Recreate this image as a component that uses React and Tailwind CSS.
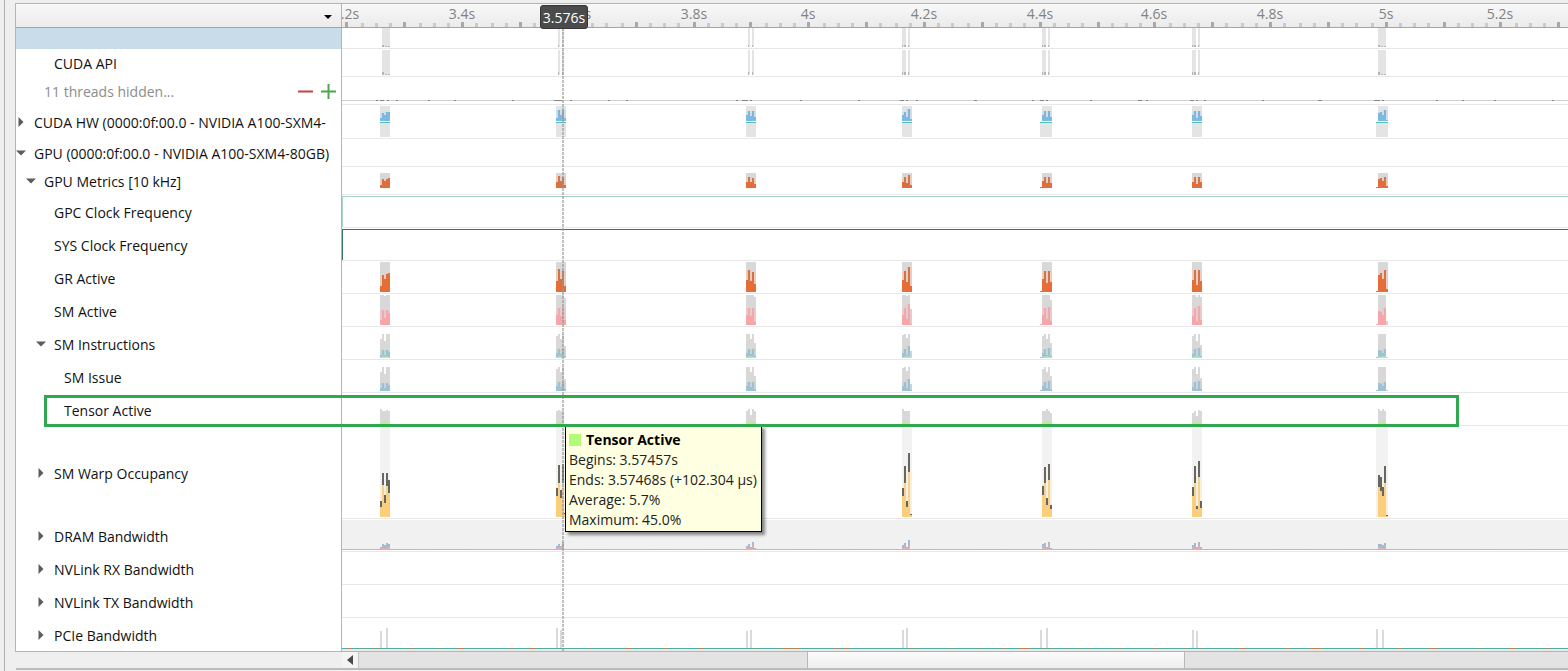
import React from "react";

const ORIGIN = 342;
const COLUMN = 2;

const CLUSTERS = [
  {
    x: 380,
    gr: [6, 17, 13, 18, 19],
    sm: [5, 15, 7, 15, 12], smMax: [30, 30, 29, 30, 30],
    issue: [3, 8, 3, 8, 6], issueMax: [19, 24, 17, 24, 24],
    tensor: [16, 14, 14, 15, 14],
    hw: [3, 8, 6, 9, 9],
    warp: [[16, 10], [44, 32], [22, 14], [44, 31], [37, 24]],
    dram: [3, 6, 5, 7, 6],
    api: [[382, 8]], pcie: [[380, 17], [386, 20]],
  },
  {
    x: 556,
    gr: [11, 23, 13, 21, 6],
    sm: [10, 17, 9, 18, 5], smMax: [30, 30, 30, 30, 27],
    issue: [5, 9, 4, 9, 2], issueMax: [22, 24, 19, 24, 12],
    tensor: [14, 15, 14, 14, 1],
    hw: [3, 11, 6, 11, 3],
    warp: [[29, 21], [52, 34], [27, 19], [53, 34], [4, 3]],
    dram: [4, 6, 4, 8, 1],
    api: [[558, 2], [562, 2]], pcie: [[556, 20], [560, 18]],
  },
  {
    x: 746,
    gr: [12, 22, 11, 20, 8],
    sm: [10, 17, 9, 17, 3], smMax: [30, 30, 30, 30, 28],
    issue: [5, 9, 4, 9, 2], issueMax: [24, 24, 19, 24, 15],
    tensor: [14, 16, 10, 16, 14],
    hw: [6, 10, 5, 10, 4],
    warp: [[29, 21], [51, 34], [20, 14], [53, 36], [8, 4]],
    dram: [4, 6, 3, 8, 2],
    api: [[748, 2], [752, 2]], pcie: [[746, 17], [750, 18]],
  },
  {
    x: 902,
    gr: [12, 21, 10, 25, 6],
    sm: [10, 17, 6, 21, 1], smMax: [30, 30, 29, 30, 16],
    issue: [5, 9, 3, 12, 1], issueMax: [23, 24, 20, 24, 7],
    tensor: [16, 14, 14, 14, 1],
    hw: [6, 9, 4, 12, 2],
    warp: [[29, 21], [51, 34], [16, 10], [64, 45], [3, 2]],
    dram: [5, 7, 3, 10, 1],
    api: [[902, 4], [908, 2]], pcie: [[902, 18], [906, 20]],
  },
  {
    x: 1042, lead: true,
    gr: [13, 21, 9, 21, 10],
    sm: [10, 17, 6, 18, 4], smMax: [30, 30, 30, 30, 25],
    issue: [5, 9, 3, 10, 2], issueMax: [22, 24, 19, 24, 15],
    tensor: [14, 14, 16, 14, 12],
    hw: [6, 10, 4, 10, 4],
    warp: [[31, 22], [50, 34], [19, 12], [53, 37], [12, 8]],
    dram: [6, 7, 3, 8, 2],
    api: [[1042, 4], [1048, 2]], pcie: [[1040, 18], [1046, 20]],
  },
  {
    x: 1192,
    gr: [12, 22, 7, 22, 11],
    sm: [9, 17, 4, 19, 5], smMax: [30, 30, 28, 30, 28],
    issue: [4, 9, 2, 10, 2], issueMax: [22, 24, 17, 24, 13],
    tensor: [12, 14, 9, 15, 14],
    hw: [6, 10, 3, 10, 5],
    warp: [[30, 21], [51, 34], [11, 8], [56, 40], [16, 9]],
    dram: [5, 7, 3, 8, 3],
    api: [[1192, 4], [1198, 2]], pcie: [[1192, 18], [1196, 17]],
  },
  {
    x: 1378, lead: true,
    gr: [17, 19, 13, 22, 3],
    sm: [14, 13, 10, 17, 0], smMax: [30, 30, 30, 30, 4],
    issue: [8, 7, 5, 9, 0], issueMax: [24, 24, 24, 24, 1],
    tensor: [16, 14, 16, 14, 1],
    hw: [8, 9, 6, 11, 1],
    warp: [[42, 30], [40, 26], [30, 21], [51, 34], [2, 1]],
    dram: [6, 6, 5, 7, 0],
    api: [[1378, 8]], pcie: [[1376, 19], [1382, 18]],
  },
];

const px = (x) => x - ORIGIN;

function neighbours(values, i) {
  const left = i > 0 ? values[i - 1] : 0;
  const right = i < values.length - 1 ? values[i + 1] : 0;
  return [left, right];
}

/* Average bars in front of the column's range, with a tint where only the peak reaches. */
function Bars({ x, base, values, max, back = "#d8d8d8", tint, color, tall, lead }) {
  return (
    <g>
      {values.map((h, i) => {
        const [l, r] = neighbours(values, i);
        const peak = Math.max(h, Math.min(max[i], Math.max(l, r)));
        const shade = h > l && h > r && i > 0 ? h - Math.max(l, r) : 0;
        const cx = px(x) + i * COLUMN;
        return (
          <g key={i}>
            <rect x={cx} y={base - max[i]} width={COLUMN} height={max[i]} fill={back} />
            <rect x={cx} y={base - peak} width={COLUMN} height={peak} fill={tint} />
            <rect x={cx} y={base - h} width={COLUMN} height={h} fill={color} />
            <rect x={cx} y={base - h} width={COLUMN} height={shade} fill={tall} />
          </g>
        );
      })}
      {lead && <rect x={px(x) - 2} y={base - 1} width="2" height="1" fill={tall} />}
    </g>
  );
}

const full = (n) => [n, n, n, n, n];

function ApiBars({ top, base, mark }) {
  return CLUSTERS.map((c) =>
    c.api.map(([x, w]) => (
      <g key={x}>
        <rect x={px(x)} y={top} width={w} height={base - top} fill="#e4e4e4" />
        <rect x={px(x)} y={base - mark} width={w > 4 ? 2 : 1} height={mark} fill="#b4b4b4" />
        {w === 4 && <rect x={px(x) + 2} y={base - mark} width="2" height={mark} fill="#b4b4b4" />}
        {w > 4 && <rect x={px(x) + 3} y={base - 1} width="2" height="1" fill="#b4b4b4" />}
        {w > 4 && <rect x={px(x) + 6} y={base - 1} width="2" height="1" fill="#b4b4b4" />}
      </g>
    ))
  );
}

const THREAD_MARKS = [
  [376, 2], [380, 4], [387, 2], [396, 2], [428, 2], [454, 2], [512, 2], [554, 8], [570, 2], [608, 2], [626, 2],
  [736, 2], [742, 6], [750, 2], [800, 2], [858, 2], [900, 4], [906, 2], [916, 2], [974, 3], [1032, 2], [1040, 4],
  [1046, 2], [1090, 2], [1138, 4], [1146, 2], [1190, 4], [1196, 2], [1204, 2], [1262, 2], [1318, 4], [1374, 6],
  [1382, 2], [1436, 2], [1462, 2], [1494, 2], [1552, 2],
];

const DRAM_MARKS = [
  [342, 10], [390, 28], [430, 40], [520, 18], [580, 30], [650, 22], [700, 40], [790, 30], [850, 26], [922, 14],
  [976, 30], [1056, 20], [1084, 16], [1120, 18], [1204, 32], [1274, 36], [1340, 24], [1400, 20], [1476, 20], [1530, 30],
];

const PCIE_MARKS = [
  [348, 3], [362, 2], [371, 3], [378, 2], [410, 4], [440, 2], [458, 6], [510, 3], [530, 6], [590, 2], [626, 6],
  [664, 3], [700, 4], [754, 2], [780, 2], [784, 6], [792, 8], [834, 2], [838, 2], [844, 6], [910, 2], [914, 2],
  [950, 2], [980, 2], [1002, 4], [1020, 10], [1042, 2], [1050, 2], [1066, 2], [1078, 2], [1088, 2], [1116, 2],
  [1120, 2], [1154, 4], [1184, 2], [1200, 2], [1240, 6], [1286, 3], [1310, 12], [1360, 4], [1398, 3], [1430, 8],
  [1480, 2], [1510, 6], [1546, 4],
];

const CHARTS = {
  process: () => <ApiBars top={0} base={19} mark={2} />,
  api: () => <ApiBars top={1} base={26} mark={3} />,
  threads: () => (
    <g>
      <rect x="0" y="23" width="100%" height="1" fill="#cfcfcf" />
      {THREAD_MARKS.map(([x, w]) => (
        <rect key={x} x={px(x)} y="23" width={w} height="1" fill="#858585" />
      ))}
    </g>
  ),
  hw: () =>
    CLUSTERS.map((c) => {
      const left = px(c.x) - (c.lead ? 2 : 0);
      const width = c.lead ? 12 : 10;
      return (
        <g key={c.x}>
          <rect x={left} y="16" width={width} height="16" fill="#e4e4e4" />
          <Bars x={c.x} base={16} values={c.hw} max={full(15)} back="#e4e4e4" tint="#cfdfe9" color="#7cb8e2" tall="#83b3d2" />
          <rect x={left} y="16" width={width} height="1" fill="#f2fbfa" />
          <rect x={left} y="17" width={width} height="1" fill="#4dbfb4" />
        </g>
      );
    }),
  metrics: () =>
    CLUSTERS.map((c) => (
      <Bars key={c.x} x={c.x} base={21} values={c.gr.map((v) => Math.round(v / 2))} max={full(15)} tint="#e8cdc0" color="#e06e3c" tall="#d0764e" lead={c.lead} />
    )),
  gpc: () => (
    <g>
      <rect x="0" y="1" width="100%" height="1" fill="#a6d2c1" />
      <rect x="0" y="1" width="1" height="31" fill="#a6d2c1" />
    </g>
  ),
  sys: () => (
    <g>
      <rect x="0" y="1" width="100%" height="1" fill="#37785c" />
      <rect x="0" y="1" width="1" height="31" fill="#37785c" />
    </g>
  ),
  gr: () =>
    CLUSTERS.map((c) => (
      <Bars key={c.x} x={c.x} base={31} values={c.gr} max={full(30)} tint="#ebcdbf" color="#e56e38" tall="#d17548" lead={c.lead} />
    )),
  sm: () =>
    CLUSTERS.map((c) => (
      <Bars key={c.x} x={c.x} base={31} values={c.sm} max={c.smMax} tint="#ecc8ca" color="#f6a6a8" tall="#e6aeb0" lead={c.lead} />
    )),
  instructions: () =>
    CLUSTERS.map((c) => (
      <g key={c.x}>
        <Bars x={c.x} base={31} values={c.issue} max={c.issueMax} tint="#c6d5dc" color="#9dc2d6" tall="#a3bfce" lead={c.lead} />
        <rect x={px(c.x)} y="30" width="10" height="1" fill="#aaf09a" />
        <rect x={px(c.x) + 2} y="29" width="6" height="1" fill="#a3dfb2" />
      </g>
    )),
  issue: () =>
    CLUSTERS.map((c) => (
      <Bars key={c.x} x={c.x} base={31} values={c.issue} max={c.issueMax} tint="#c6d5dc" color="#9dc2d6" tall="#a3bfce" lead={c.lead} />
    )),
  tensor: () =>
    CLUSTERS.map((c) => (
      <Bars key={c.x} x={c.x} base={32} values={[3, 3, 3, 3, 1]} max={c.tensor} tint="#c2e8a0" color="#bdec98" tall="#bdec98" />
    )),
  warp: () =>
    CLUSTERS.map((c) => (
      <g key={c.x}>
        <rect x={px(c.x) - (c.x === 1378 ? 2 : 0)} y="0" width={c.x === 1378 ? 12 : 10} height="91" fill="#f2f2f2" />
        <Bars x={c.x} base={91} values={c.warp.map((w) => w[1])} max={c.warp.map(() => 64)} back="#f2f2f2" tint="#faefd9" color="#fbce7c" tall="#f2d397" />
        {c.warp.map(([top, bottom], i) => (
          <rect key={i} x={px(c.x) + i * COLUMN} y={91 - top} width={COLUMN} height={top - bottom} fill="#68665f" />
        ))}
      </g>
    )),
  dram: () => (
    <g>
      <rect x="0" y="1" width="100%" height="29" fill="#f1f1f1" />
      <rect x="0" y="30" width="100%" height="1" fill="#eaa6aa" />
      {DRAM_MARKS.map(([x, w]) => (
        <rect key={x} x={px(x)} y="30" width={w} height="1" fill="#9fc0d4" />
      ))}
      {CLUSTERS.map((c) =>
        c.dram.map((h, i) => (
          <g key={c.x + i}>
            <rect x={px(c.x) + i * COLUMN} y={31 - h} width={COLUMN} height={h} fill="#a3bccf" />
            <rect x={px(c.x) + i * COLUMN} y={31 - Math.ceil(h / 2.5)} width={COLUMN} height={Math.ceil(h / 2.5)} fill="#e5abb1" />
          </g>
        ))
      )}
    </g>
  ),
  empty: () => null,
  pcie: () => (
    <g>
      {CLUSTERS.map((c) =>
        c.pcie.map(([x, h]) => <rect key={x} x={px(x)} y={30 - h} width="2" height={h} fill="#dadada" />)
      )}
      <rect x="0" y="30" width="100%" height="1" fill="#56a8a3" />
      <rect x="0" y="31" width="100%" height="1" fill="#dff3f1" />
      {PCIE_MARKS.map(([x, w]) => (
        <rect key={x} x={px(x)} y="30" width={w} height="1" fill="#b98356" />
      ))}
    </g>
  ),
};

const ROWS = [
  { id: "process", size: "h-[21px]", indent: "pl-0", selected: true },
  { id: "api", label: "CUDA API", size: "h-7", indent: "pl-5" },
  { id: "threads", label: "11 threads hidden...", size: "h-7", indent: "pl-[10px]", hiddenThreads: true },
  { id: "hw", label: "CUDA HW (0000:0f:00.0 - NVIDIA A100-SXM4-", size: "h-[34px]", indent: "pl-0", state: "closed" },
  { id: "gpu", label: "GPU (0000:0f:00.0 - NVIDIA A100-SXM4-80GB)", size: "h-7", indent: "pl-0", state: "open", chart: "empty" },
  { id: "metrics", label: "GPU Metrics [10 kHz]", size: "h-7", indent: "pl-[10px]", state: "open" },
  { id: "gpc", label: "GPC Clock Frequency", size: "h-[33px]", indent: "pl-5" },
  { id: "sys", label: "SYS Clock Frequency", size: "h-[33px]", indent: "pl-5" },
  { id: "gr", label: "GR Active", size: "h-[33px]", indent: "pl-5" },
  { id: "sm", label: "SM Active", size: "h-[33px]", indent: "pl-5" },
  { id: "instructions", label: "SM Instructions", size: "h-[33px]", indent: "pl-5", state: "open" },
  { id: "issue", label: "SM Issue", size: "h-[33px]", indent: "pl-[30px]" },
  { id: "tensor", label: "Tensor Active", size: "h-[33px]", indent: "pl-[30px]" },
  { id: "warp", label: "SM Warp Occupancy", size: "h-[93px]", indent: "pl-5", state: "closed" },
  { id: "dram", label: "DRAM Bandwidth", size: "h-[33px]", indent: "pl-5", state: "closed" },
  { id: "nvrx", label: "NVLink RX Bandwidth", size: "h-[33px]", indent: "pl-5", state: "closed", chart: "empty" },
  { id: "nvtx", label: "NVLink TX Bandwidth", size: "h-[33px]", indent: "pl-5", state: "closed", chart: "empty" },
  { id: "pcie", label: "PCIe Bandwidth", size: "h-[33px]", indent: "pl-5", state: "closed" },
];

function Toggle({ state, label }) {
  if (!state) return <span className="w-[10px] shrink-0" />;
  return (
    <button type="button" aria-label={label} aria-expanded={state === "open"} className="flex h-4 w-[10px] shrink-0 items-center justify-center">
      <svg width="10" height="10" viewBox="0 0 10 10" fill="#5c5c5c" aria-hidden="true">
        {state === "open" ? <path d="M0 2.5H10L5 7.5Z" /> : <path d="M2.5 0V10L7.5 5Z" />}
      </svg>
    </button>
  );
}

function TimelineRow({ row }) {
  const Chart = CHARTS[row.chart || row.id];
  return (
    <div className={`flex ${row.size}`}>
      <div className={`flex w-[326px] shrink-0 items-center gap-2 border-r border-[#b4b4b4] ${row.indent} ${row.selected ? "bg-[#c9dcea]" : "bg-white"}`}>
        <Toggle state={row.state} label={row.label} />
        <span className={`min-w-0 flex-1 overflow-hidden pt-[2px] whitespace-nowrap leading-5 ${row.hiddenThreads ? "text-[#8c8c8c]" : "text-[#111]"}`}>
          {row.label}
        </span>
        {row.hiddenThreads && (
          <span className="flex gap-[7px] pr-[5px]">
            <button type="button" aria-label="Show fewer threads">
              <svg width="16" height="16" viewBox="0 0 16 16" aria-hidden="true"><path d="M1 8.5H16" stroke="#c0453f" strokeWidth="2" /></svg>
            </button>
            <button type="button" aria-label="Show more threads">
              <svg width="16" height="16" viewBox="0 0 16 16" aria-hidden="true"><path d="M1 8.5H16M8.5 1V16" stroke="#4ba64d" strokeWidth="2" /></svg>
            </button>
          </span>
        )}
      </div>
      <div className="min-w-0 flex-1 overflow-hidden border-b border-[#e8e8e8] bg-white">
        <svg className="block h-full w-full" shapeRendering="crispEdges" aria-hidden="true"><Chart /></svg>
      </div>
    </div>
  );
}

const LABELS = ["3.2s", "3.4s", "3.6s", "3.8s", "4s", "4.2s", "4.4s", "4.6s", "4.8s", "5s", "5.2s"];
const STEP = 115.4;
const MINORS = 8;

/* Ticks snap up to the two-pixel column grid of the charts. */
const snap = (x) => Math.ceil(x / COLUMN) * COLUMN;

function Ruler() {
  const ticks = Array.from({ length: 90 }, (_, i) => i);
  return (
    <svg className="block h-full w-full" aria-hidden="true">
      <g shapeRendering="crispEdges">
        {ticks.map((i) => {
          const major = i % 4 === 0;
          return (
            <rect key={i} x={snap(4 + (i * STEP) / MINORS) - 1} y={major ? 18 : 19} width="3" height={major ? 5 : 4} fill={major ? "#a9a9a9" : "#cacaca"} />
          );
        })}
      </g>
      {LABELS.map((label, i) => (
        <text key={label} x={snap(4 + i * STEP)} y="15" textAnchor="middle" fill="#828282">{label}</text>
      ))}
    </svg>
  );
}

export default function App() {
  return (
    <div className="flex bg-[#efefef] font-['Open_Sans','Noto_Sans',sans-serif] text-sm">
      <div className="w-[5px] shrink-0 border-r border-[#b0b0b0]" />
      <main className="min-w-0 flex-1 pt-[3px] pb-px pl-[10px]">
        <div className="relative overflow-hidden border-b border-l border-[#b4b4b4]">
          <header className="flex h-[25px] border-y border-t-[#b4b4b4] border-b-[#a4a4a4] bg-linear-to-b from-[#f8f8f8] to-[#ebebeb]">
            <div className="flex w-[326px] shrink-0 justify-end border-r border-[#b4b4b4] pt-[2px] pr-[9px]">
              <button type="button" aria-label="Timeline options">
                <svg width="8" height="4" viewBox="0 0 8 4" aria-hidden="true"><path d="M0 0H8L4 4Z" fill="#000" /></svg>
              </button>
            </div>
            <div className="min-w-0 flex-1 overflow-hidden"><Ruler /></div>
          </header>
          {ROWS.map((row) => <TimelineRow key={row.id} row={row} />)}

          <svg className="pointer-events-none absolute top-[25px] left-[546px] h-full w-[2px]" aria-hidden="true">
            <path d="M1 0V700" stroke="#969696" strokeOpacity="0.6" strokeWidth="2" strokeDasharray="3 1" />
          </svg>
          <div className="absolute top-[2px] left-[524px] flex h-6 w-12 items-center justify-center rounded-[3px] border border-[#363636] bg-[#4b4b4b] pt-px text-white">
            3.576s
          </div>
          <div role="tooltip" className="absolute top-[422px] left-[549px] border border-black bg-[#ffffe1] pt-1 pr-1 pb-px pl-[3px] leading-5 whitespace-nowrap text-[#222] shadow-[3px_3px_3px_rgba(0,0,0,0.45)]">
            <div className="flex items-center gap-[5px] font-bold text-black">
              <span className="h-3 w-3 bg-[#b4fc78]" />
              Tensor Active
            </div>
            <div>Begins: 3.57457s</div>
            <div>Ends: 3.57468s (+102.304 µs)</div>
            <div>Average: 5.7%</div>
            <div>Maximum: 45.0%</div>
          </div>
          <div className="pointer-events-none absolute top-[392px] left-7 h-8 w-[1415px] border-[3px] border-[#2fa850]" />
        </div>
        <div className="ml-[1px] flex h-[18px] border-b-2 border-[#bcbcbc]">
          <div className="w-[326px] shrink-0" />
          <div className="flex min-w-0 flex-1" role="scrollbar" aria-label="Timeline position" aria-controls="root" aria-valuenow={54} aria-orientation="horizontal">
            <button type="button" aria-label="Scroll left" className="flex w-[17px] shrink-0 items-center justify-center border-r border-[#c4c4c4] bg-[#f4f4f4]">
              <svg width="6" height="10" viewBox="0 0 6 10" aria-hidden="true"><path d="M6 0V10L0 5Z" fill="#4a4a4a" /></svg>
            </button>
            <div className="flex-[449] bg-[#e3e3e3]" />
            <div className="flex-[376] border-x border-[#b8b8b8] bg-linear-to-b from-[#fbfbfb] to-[#eeeeee]" />
            <div className="flex-[384] bg-[#e3e3e3]" />
          </div>
        </div>
      </main>
    </div>
  );
}
